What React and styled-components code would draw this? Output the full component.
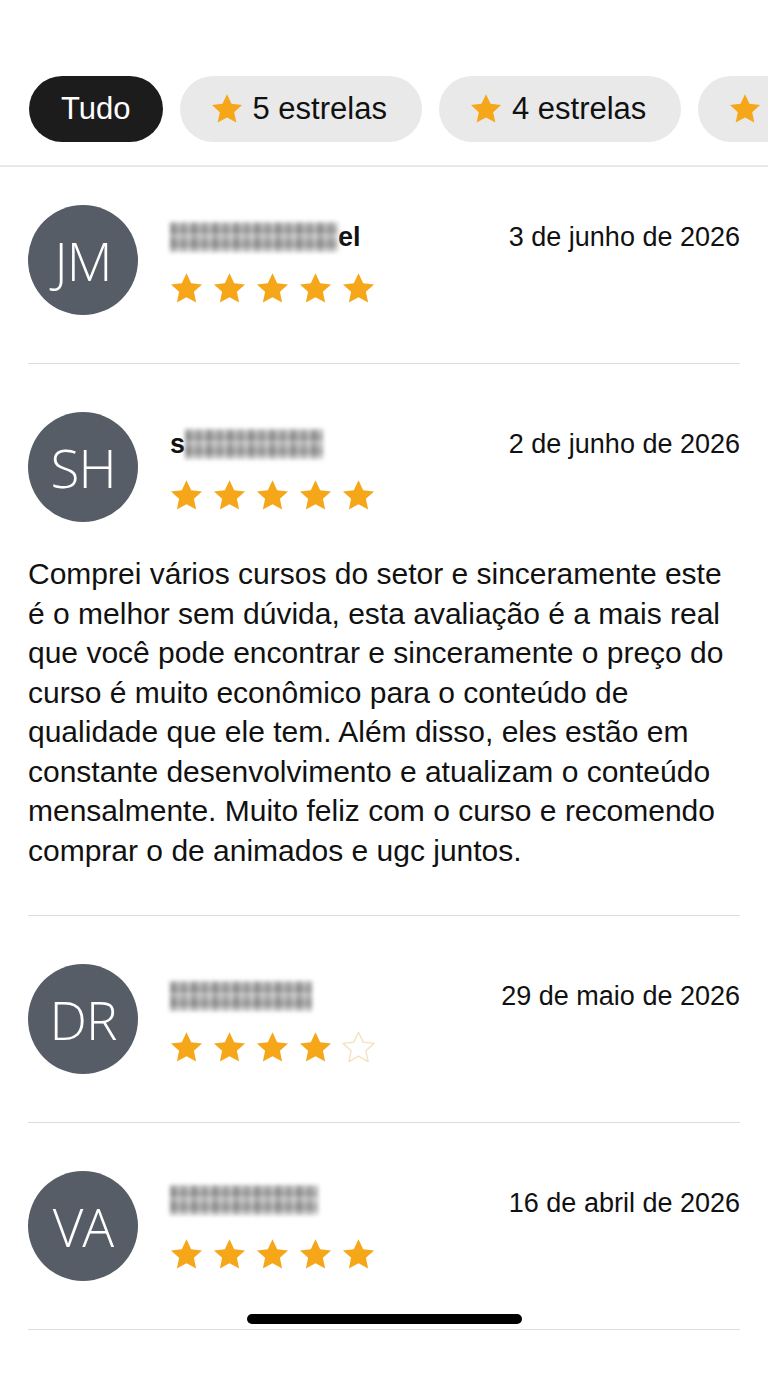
import React from "react";
import styled, { createGlobalStyle } from "styled-components";

const GlobalStyle = createGlobalStyle`
  html, body {
    margin: 0;
    padding: 0;
    background: #fff;
  }
  body {
    font-family: "Liberation Sans", Arial, sans-serif;
    color: #111;
    -webkit-font-smoothing: antialiased;
  }
`;

const Page = styled.div`
  width: 768px;
  min-height: 1376px;
  overflow: hidden;
  padding-top: 76px;
  box-sizing: border-box;
`;

const FilterBar = styled.div`
  display: flex;
  gap: 17px;
  padding: 0 29px 23px;
  border-bottom: 2px solid #e8e8e8;
  overflow: hidden;
`;

const Chip = styled.button`
  flex: 0 0 auto;
  display: flex;
  align-items: center;
  gap: 10px;
  height: 66px;
  padding: 0 ${(p) => (p.$active ? "32px" : "35px")} 0 ${(p) => (p.$active ? "32px" : "31px")};
  border: none;
  border-radius: 33px;
  background: ${(p) => (p.$active ? "#1c1c1c" : "#e9e9e9")};
  color: ${(p) => (p.$active ? "#fff" : "#111")};
  font-family: inherit;
  font-size: 31px;
`;

const ReviewList = styled.div`
  padding: 0 28px;
`;

const Review = styled.article`
  padding: ${(p) => (p.$first ? "38px" : "48px")} 0 48px;
  border-bottom: 1px solid #dcdcdc;
`;

const Header = styled.div`
  display: flex;
  align-items: flex-start;
`;

const Avatar = styled.div`
  flex: 0 0 auto;
  width: 110px;
  height: 110px;
  border-radius: 50%;
  background: #565d66;
  color: #fff;
  display: flex;
  align-items: center;
  justify-content: center;
  font-family: "Open Sans", sans-serif;
  font-weight: 350;
  font-size: 53px;
  letter-spacing: -1px;
`;

const Meta = styled.div`
  flex: 1;
  display: flex;
  flex-direction: column;
  padding: 17px 0 0 32px;
`;

const Name = styled.div`
  height: 30px;
  display: flex;
  align-items: center;
  font-weight: 700;
  font-size: 27px;
`;

const Redacted = styled.span`
  display: inline-block;
  width: ${(p) => p.$w}px;
  height: 30px;
  margin-top: ${(p) => p.$shift || 0}px;
  background: repeating-linear-gradient(
      0deg,
      rgba(255, 255, 255, 0.25) 0 5px,
      rgba(60, 60, 60, 0.2) 5px 9px,
      transparent 9px 14px
    ),
    repeating-linear-gradient(
      90deg,
      #8a8a8a 0 6px,
      #b3b3b3 6px 11px,
      #979797 11px 17px,
      #c0c0c0 17px 21px
    );
  filter: blur(2.2px);
  opacity: 0.9;
`;

const Stars = styled.div`
  display: flex;
  gap: 10px;
  margin-top: 20px;
`;

const DateText = styled.div`
  flex: 0 0 auto;
  padding-top: 17px;
  font-size: 27px;
  line-height: 30px;
`;

const Body = styled.p`
  margin: 32px 0 -3px;
  font-size: 30px;
  line-height: 39.5px;
`;

const HomeIndicator = styled.div`
  position: fixed;
  left: 247px;
  top: 1314px;
  width: 275px;
  height: 10px;
  border-radius: 5px;
  background: #000;
`;

const STAR = "M12 .9l3.4 7.2 7.9.9-5.9 5.4 1.6 7.8L12 18.3l-7 3.9 1.6-7.8L.7 9l7.9-.9z";

function Star({ size = 33, filled = true }) {
  return (
    <svg width={size} height={size} viewBox="0 0 24 24">
      <path
        d={STAR}
        fill={filled ? "#f6a719" : "none"}
        stroke={filled ? "none" : "#f2e2c2"}
        strokeWidth="1"
        strokeLinejoin="round"
      />
    </svg>
  );
}

const reviews = [
  { initials: "JM", blur: 168, suffix: "el", date: "3 de junho de 2026", rating: 5 },
  {
    initials: "SH",
    prefix: "s",
    blur: 138,
    date: "2 de junho de 2026",
    rating: 5,
    text:
      "Comprei vários cursos do setor e sinceramente este é o melhor sem dúvida, esta avaliação é a mais real que você pode encontrar e sinceramente o preço do curso é muito econômico para o conteúdo de qualidade que ele tem. Além disso, eles estão em constante desenvolvimento e atualizam o conteúdo mensalmente. Muito feliz com o curso e recomendo comprar o de animados e ugc juntos.",
  },
  { initials: "DR", blur: 142, date: "29 de maio de 2026", rating: 4 },
  { initials: "VA", blur: 148, shift: -6, date: "16 de abril de 2026", rating: 5 },
];

export default function App() {
  return (
    <Page>
      <GlobalStyle />
      <FilterBar>
        <Chip $active>Tudo</Chip>
        <Chip>
          <Star size={32} />5 estrelas
        </Chip>
        <Chip>
          <Star size={32} />4 estrelas
        </Chip>
        <Chip>
          <Star size={32} />3 estrelas
        </Chip>
      </FilterBar>
      <ReviewList>
        {reviews.map((r, i) => (
          <Review key={r.initials} $first={i === 0}>
            <Header>
              <Avatar>{r.initials}</Avatar>
              <Meta>
                <Name>
                  {r.prefix}
                  <Redacted $w={r.blur} $shift={r.shift} />
                  {r.suffix}
                </Name>
                <Stars>
                  {[1, 2, 3, 4, 5].map((n) => (
                    <Star key={n} filled={n <= r.rating} />
                  ))}
                </Stars>
              </Meta>
              <DateText>{r.date}</DateText>
            </Header>
            {r.text && <Body>{r.text}</Body>}
          </Review>
        ))}
      </ReviewList>
      <HomeIndicator />
    </Page>
  );
}
